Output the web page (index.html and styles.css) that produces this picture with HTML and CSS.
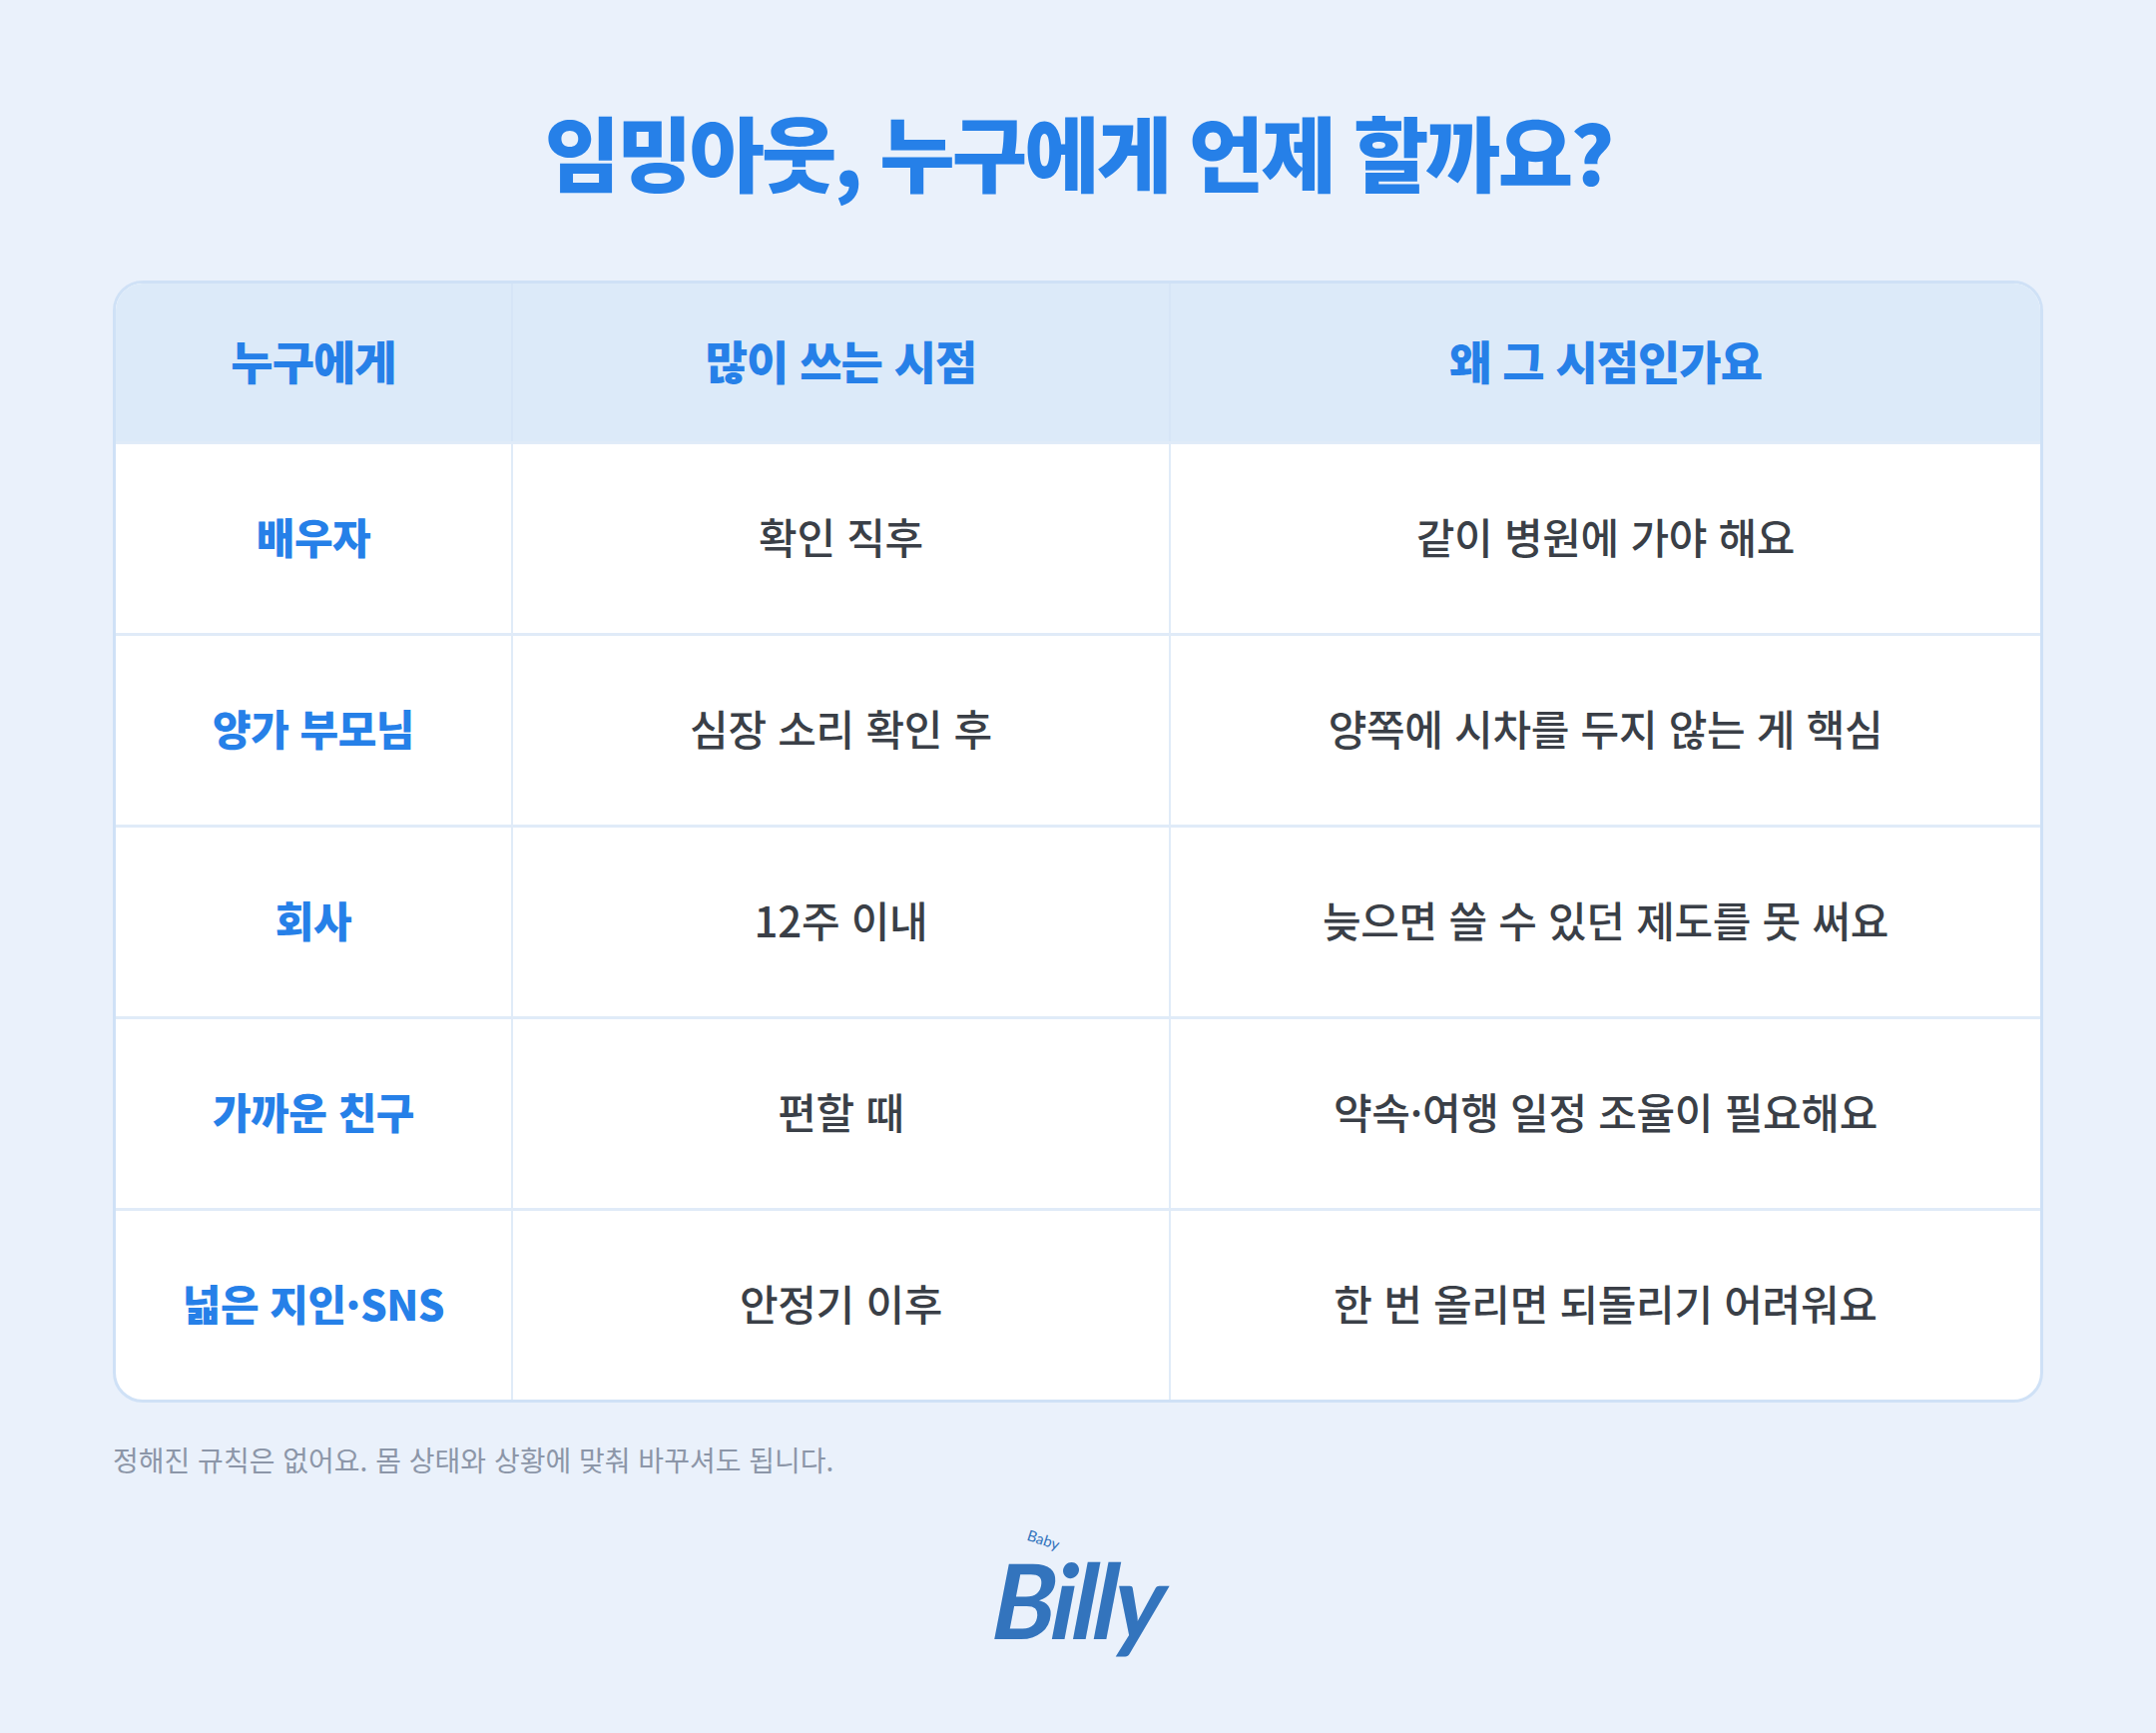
FILE: index.html
```html
<!DOCTYPE html>
<html lang="ko">
<head>
<meta charset="utf-8">
<title>임밍아웃, 누구에게 언제 할까요?</title>
<link rel="stylesheet" href="styles.css">
</head>
<body>
<main class="page">
  <h1 class="title">임밍아웃, 누구에게 언제 할까요?</h1>
  <div class="table">
    <div class="cell head">누구에게</div>
    <div class="cell head sep">많이 쓰는 시점</div>
    <div class="cell head sep">왜 그 시점인가요</div>

    <div class="cell who row">배우자</div>
    <div class="cell txt row sep">확인 직후</div>
    <div class="cell txt row sep">같이 병원에 가야 해요</div>

    <div class="cell who row">양가 부모님</div>
    <div class="cell txt row sep">심장 소리 확인 후</div>
    <div class="cell txt row sep">양쪽에 시차를 두지 않는 게 핵심</div>

    <div class="cell who row">회사</div>
    <div class="cell txt row sep">12주 이내</div>
    <div class="cell txt row sep">늦으면 쓸 수 있던 제도를 못 써요</div>

    <div class="cell who row">가까운 친구</div>
    <div class="cell txt row sep">편할 때</div>
    <div class="cell txt row sep">약속·여행 일정 조율이 필요해요</div>

    <div class="cell who row">넓은 지인·SNS</div>
    <div class="cell txt row sep">안정기 이후</div>
    <div class="cell txt row sep">한 번 올리면 되돌리기 어려워요</div>
  </div>
  <p class="note">정해진 규칙은 없어요. 몸 상태와 상황에 맞춰 바꾸셔도 됩니다.</p>
  <div class="logo-wrap">
    <div class="logo">
      <span class="logo-baby">Baby</span>
      <span class="logo-billy">Billy</span>
    </div>
  </div>
</main>
</body>
</html>
```
FILE: styles.css
```css
* { box-sizing: border-box; }
html, body {
  margin: 0;
  padding: 0;
  background: #EAF1FB;
}
body {
  font-family: "Noto Sans CJK KR", "Noto Sans", sans-serif;
  width: 2160px;
  min-height: 1736px;
}
.page {
  padding: 102px 113px 0;
  display: flex;
  flex-direction: column;
}
.title {
  margin: 0;
  text-align: center;
  font-size: 82px;
  line-height: 98px;
  font-weight: 900;
  letter-spacing: -3px;
  color: #2680E8;
}
.table {
  margin-top: 81px;
  border: 3px solid #CFE1F6;
  border-radius: 30px;
  overflow: hidden;
  background: #FFFFFF;
  display: grid;
  grid-template-columns: 396px 659px 1fr;
  grid-template-rows: 158px repeat(5, 192px);
}
.cell {
  display: flex;
  align-items: center;
  justify-content: center;
  text-align: center;
  padding-bottom: 6px;
}
.head {
  background: #DCEAF9;
  color: #2680E8;
  font-size: 46px;
  font-weight: 800;
  letter-spacing: -1px;
}
.sep { border-left: 2px solid #E0EBF8; }
.head.sep { border-left-color: #D6E5F7; }
.row { border-top: 3px solid #E0EBF8; }
.who {
  color: #2680E8;
  font-size: 42px;
  font-weight: 800;
  letter-spacing: -0.5px;
}
.txt {
  color: #3A3F47;
  font-size: 42px;
  font-weight: 500;
  letter-spacing: -0.3px;
}
.note {
  margin: 38px 0 0;
  font-size: 28px;
  line-height: 38px;
  color: #8C96A8;
  font-weight: 400;
  letter-spacing: 0;
}
.logo-wrap {
  margin-top: 50px;
  display: flex;
  justify-content: center;
}
.logo {
  position: relative;
  padding-top: 12px;
  color: #3374BD;
}
.logo-billy {
  display: block;
  font-family: "Lato", "DejaVu Sans", sans-serif;
  font-style: italic;
  font-weight: 700;
  font-size: 104px;
  line-height: 118px;
  letter-spacing: -4px;
  transform: skewX(-4deg);
}
.logo-baby {
  position: absolute;
  left: 34px;
  top: 2px;
  font-family: "Lato", sans-serif;
  font-size: 15px;
  font-weight: 400;
  transform: rotate(18deg);
}
```
